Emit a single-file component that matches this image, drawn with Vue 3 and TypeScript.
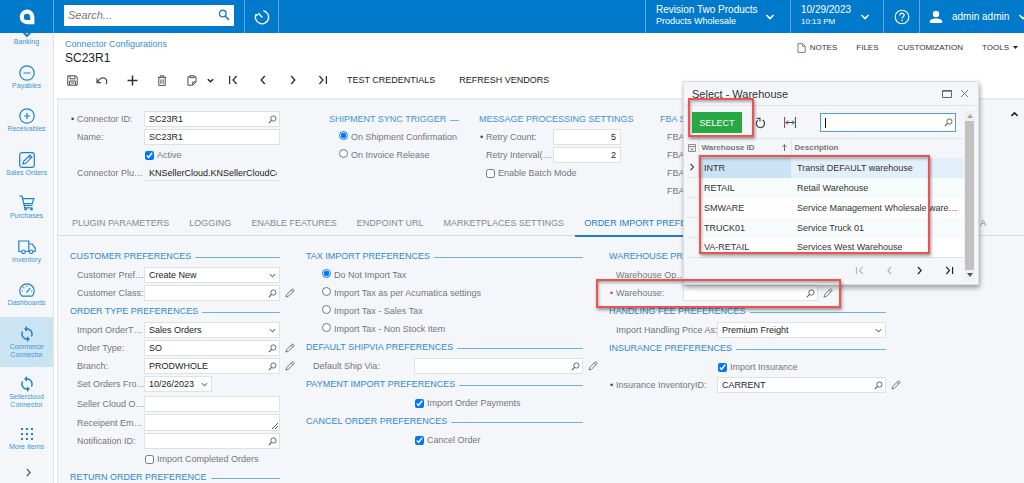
<script setup lang="ts">
import { ref } from 'vue'

type NavIcon = 'bank' | 'minus' | 'plus' | 'edit' | 'cart' | 'truck' | 'gauge' | 'sync' | 'grid'
interface NavItem { icon: NavIcon; label: string; active?: boolean }
interface Warehouse { id: string; description: string }

const modules: NavItem[] = [
  { icon: 'bank', label: 'Banking' },
  { icon: 'minus', label: 'Payables' },
  { icon: 'plus', label: 'Receivables' },
  { icon: 'edit', label: 'Sales Orders' },
  { icon: 'cart', label: 'Purchases' },
  { icon: 'truck', label: 'Inventory' },
  { icon: 'gauge', label: 'Dashboards' },
]
const extensions: NavItem[] = [
  { icon: 'sync', label: 'Commerce Connector', active: true },
  { icon: 'sync', label: 'Sellercloud Connector' },
  { icon: 'grid', label: 'More Items' },
]

const iconPaths: Record<NavIcon, string> = {
  bank: 'M8 3v9M4.6 11.6L8 15l3.4-3.4',
  minus: 'M8 .8a7.2 7.2 0 1 0 0 14.4A7.2 7.2 0 0 0 8 .8zM4.5 8h7',
  plus: 'M8 .8a7.2 7.2 0 1 0 0 14.4A7.2 7.2 0 0 0 8 .8zM5 8h6M8 5v6',
  edit: 'M3 .7h10A2.3 2.3 0 0 1 15.3 3v10a2.3 2.3 0 0 1-2.3 2.3H3A2.3 2.3 0 0 1 .7 13V3A2.3 2.3 0 0 1 3 .7zM4 12l.7-2.8 6.2-6.1 2 2-6.1 6.2zM9.6 4.4l2 2',
  cart: 'M.5 1.2h2.6l2 9.3h8.4M3.6 3.6h11.2l-1.5 5H4.7M5.5 10.5v2.3h8',
  truck: 'M2.6 12.5H-.2v-10.500h10v10.500H6.400M9.800 5h3.400l3 3.700v3.800h-2M10.200 12.500h.4',
  gauge: 'M3 14.2a7.2 7.2 0 1 1 10 0zM7.4 10.6l3.7-4.4M2.8 9h1.2M12 9h1.2M8 3.6v1.2M4.3 5.3l.9.9',
  sync: '',
  grid: '',
}

const tabs = ['PLUGIN PARAMETERS', 'LOGGING', 'ENABLE FEATURES', 'ENDPOINT URL', 'MARKETPLACES SETTINGS', 'ORDER IMPORT PREFE']
const activeTab = ref(5)

const taxOptions = ['Do Not Import Tax', 'Import Tax as per Acumatica settings', 'Import Tax - Sales Tax', 'Import Tax - Non Stock Item']
const tax = ref(taxOptions[0])
const triggers = ['On Shipment Confirmation', 'On Invoice Release']
const trigger = ref(triggers[0])

const warehouses: Warehouse[] = [
  { id: 'INTR', description: 'Transit DEFAULT warehouse' },
  { id: 'RETAIL', description: 'Retail Warehouse' },
  { id: 'SMWARE', description: 'Service Management Wholesale ware…' },
  { id: 'TRUCK01', description: 'Service Truck 01' },
  { id: 'VA-RETAIL', description: 'Services West Warehouse' },
]
const selected = ref('INTR')
</script>

<template>
  <svg class="defs" aria-hidden="true">
    <symbol id="i-lookup" viewBox="0 0 10 10"><g fill="none" stroke="currentColor"><circle cx="6" cy="3.9" r="2.9" stroke-width="1" /><path d="M3.9 6.1L1 9" stroke-width="1.2" /></g></symbol>
    <symbol id="i-pencil" viewBox="0 0 10 10"><path d="M1 9l.6-2.3L7.2 1.1c.7-.7 2.4.9 1.7 1.7L3.3 8.4zM6.1 2.2l1.7 1.7" fill="none" stroke="currentColor" stroke-width=".9" /></symbol>
    <symbol id="i-down" viewBox="0 0 10 10"><path d="M2 3.5l3 3 3-3" fill="none" stroke="#777" stroke-width="1.2" /></symbol>
    <symbol id="i-prev" viewBox="0 0 10 10"><path d="M6.8 1L3.2 5l3.6 4" fill="none" stroke="currentColor" stroke-width="1.4" /></symbol>
    <symbol id="i-next" viewBox="0 0 10 10"><path d="M3.2 1l3.6 4-3.6 4" fill="none" stroke="currentColor" stroke-width="1.4" /></symbol>
    <symbol id="i-first" viewBox="0 0 10 10"><path d="M8.6 1L5 5l3.6 4M1.6 1v8" fill="none" stroke="currentColor" stroke-width="1.3" /></symbol>
    <symbol id="i-last" viewBox="0 0 10 10"><path d="M1.4 1L5 5 1.4 9M8.4 1v8" fill="none" stroke="currentColor" stroke-width="1.3" /></symbol>
  </svg>
  <div class="app">
    <header class="topbar">
      <a class="logo" href="#" aria-label="Home">
        <svg width="16" height="16" viewBox="0 0 16 16"><path d="M8 .6a7.4 7.4 0 0 1 7.4 7.4v7.2H8A7.3 7.3 0 0 1 8 .6z" fill="#fff" /><path d="M8 4.7a3.2 3.2 0 0 1 3.2 3.2v3.2H8a3.2 3.2 0 0 1 0-6.4z" fill="#027acc" /></svg>
      </a>
      <div class="search-cell">
        <label class="search">
          <input type="text" placeholder="Search..." aria-label="Search" />
          <svg width="12" height="12" viewBox="0 0 12 12" fill="none" stroke="#1b7fcc"><circle cx="4.8" cy="4.6" r="3.3" stroke-width="1.4" /><path d="M7.2 7l3.8 4" stroke-width="1.7" /></svg>
        </label>
      </div>
      <button class="history" aria-label="History">
        <svg width="16" height="16" viewBox="0 0 16 16" fill="none" stroke="#fff" stroke-width="1.4"><path d="M9.400 1.700A6.600 6.600 0 1 1 1.900 5.600M4.400 4.200l4 4.200M1.400 5.800l2.600.2" /></svg>
      </button>
      <button class="company">
        <span class="two"><span class="big">Revision Two Products</span><span class="small">Products Wholesale</span></span>
        <svg class="chev" viewBox="0 0 10 10"><path d="M1.500 3l3.500 3.600L8.500 3" fill="none" stroke="#fff" stroke-width="1.5" /></svg>
      </button>
      <button class="date">
        <span class="two"><span class="big">10/29/2023</span><span class="time">10:13 PM</span></span>
        <svg class="chev" viewBox="0 0 10 10"><path d="M1.500 3l3.500 3.600L8.500 3" fill="none" stroke="#fff" stroke-width="1.5" /></svg>
      </button>
      <button class="help" aria-label="Help">
        <svg width="16" height="16" viewBox="0 0 16 16" fill="none" stroke="#fff"><circle cx="8" cy="8" r="6.8" stroke-width="1.1" /><path d="M5.900 6.400c0-3 4.300-2.800 4.300-.3 0 1.700-2.100 1.700-2.100 3.500M8.100 10.800v1.400" stroke-width="1.2" /></svg>
      </button>
      <button class="user">
        <svg width="14" height="14" viewBox="0 0 14 14" fill="#fff"><circle cx="7" cy="4" r="3.2" /><path d="M.8 13v-1.600c0-4 12.400-4 12.400 0V13z" /></svg>
        <span class="big">admin admin</span>
        <svg class="chev" viewBox="0 0 10 10"><path d="M1.500 3l3.500 3.600L8.500 3" fill="none" stroke="#fff" stroke-width="1.5" /></svg>
      </button>
    </header>

    <div class="body">
      <nav class="side" aria-label="Modules">
        <div v-for="(group, g) in [modules, extensions]" :key="g" :class="g === 0 ? 'modules' : 'extensions'">
          <a v-for="item in group" :key="item.label" href="#" class="nav-item" :class="{ active: item.active }">
            <svg width="16" height="16" viewBox="0 0 16 16">
              <path v-if="iconPaths[item.icon]" :d="iconPaths[item.icon]" fill="none" stroke="#1b82cd" :stroke-width="item.icon === 'bank' ? 2 : 1.2" />
              <g v-if="item.icon === 'cart'" fill="#1b82cd"><circle cx="6.6" cy="14.2" r="1.2" /><circle cx="12.6" cy="14.2" r="1.2" /></g>
              <g v-if="item.icon === 'truck'" fill="none" stroke="#1b82cd" stroke-width="1.2"><circle cx="4.5" cy="12.8" r="1.800" /><circle cx="12.2" cy="12.8" r="1.800" /></g>
              <path
                v-if="item.icon === 'sync'"
                fill="#1b82cd"
                transform="translate(-.7 -.7) scale(.725)"
                d="M12 4V1L8 5l4 4V6c3.310 0 6 2.690 6 6 0 1.010-.25 1.970-.7 2.800l1.460 1.460C19.540 15.030 20 13.570 20 12c0-4.420-3.580-8-8-8zm0 14c-3.310 0-6-2.690-6-6 0-1.010.25-1.970.7-2.800L5.240 7.740C4.460 8.970 4 10.430 4 12c0 4.420 3.580 8 8 8v3l4-4-4-4v3z"
              />
              <g v-if="item.icon === 'grid'" fill="#1b82cd">
                <template v-for="r in 3" :key="r"><rect v-for="c in 3" :key="c" :x="c * 5 - 3" :y="r * 5 - 3" width="2" height="2" /></template>
              </g>
            </svg>
            <span>{{ item.label }}</span>
          </a>
        </div>
        <button class="expand" aria-label="Expand menu"><svg width="9" height="9"><use href="#i-next" /></svg></button>
      </nav>

      <main>
        <div class="page-head">
          <div class="crumbs">
            <a href="#">Connector Configurations</a>
            <h1>SC23R1</h1>
          </div>
          <div class="links">
            <a href="#"><svg width="9" height="10" viewBox="0 0 9 10"><path d="M1 .6h4.600l2.600 2.600v6.200H1z" fill="#fff" stroke="#4f9377" /><path d="M5.400.8v2.800h2.600" fill="none" stroke="#b59a35" /></svg>NOTES</a>
            <a href="#">FILES</a>
            <a href="#">CUSTOMIZATION</a>
            <a href="#">TOOLS<svg width="5" height="3" viewBox="0 0 5 3"><path d="M0 0h5L2.500 3z" fill="#222" /></svg></a>
          </div>
        </div>

        <div class="toolbar" role="toolbar">
          <button aria-label="Save"><svg width="11" height="11" viewBox="0 0 11 11" fill="none" stroke="#4a4a45"><path d="M.8.8h8l1.400 1.400v8H.8zM3 .8v3h5v-3M2.600 10.200V6h5.800v4.200M4 8h3" /></svg></button>
          <button aria-label="Undo"><svg width="12" height="11" viewBox="0 0 12 11" fill="none" stroke="#444" stroke-width="1.2"><path d="M1 3.600v4h4M1.400 7.200C4 2.800 6.600 2.200 8.800 3.200c2.400 1.200 2.400 4 1.200 6" /></svg></button>
          <button aria-label="Add"><svg width="11" height="11" viewBox="0 0 11 11" stroke="#333" stroke-width="1.5"><path d="M.5 5.500h10M5.500.5v10" /></svg></button>
          <button aria-label="Delete"><svg width="10" height="11" viewBox="0 0 10 11" fill="none" stroke="#55524b"><path d="M.8 2.400h8.400M3.200 2.200V.8h3.600v1.400M1.800 2.600v7.800h6.400V2.600M3.900 4.400v4.400M6.100 4.400v4.400" /></svg></button>
          <button aria-label="Copy"><svg width="10" height="11" viewBox="0 0 10 11" fill="none" stroke="#4a4a45"><path d="M3 1.800H.9v8.400h4.700L9 7V1.800H7M5.700 10V7H9" /><path d="M3 .7h4v2H3z" /></svg></button>
          <button class="narrow" aria-label="Copy options"><svg width="9" height="9" viewBox="0 0 10 10"><path d="M2 3.500l3 3 3-3" fill="none" stroke="#222" stroke-width="1.6" /></svg></button>
          <button aria-label="First"><svg width="10" height="10"><use href="#i-first" /></svg></button>
          <button aria-label="Previous"><svg width="10" height="10"><use href="#i-prev" /></svg></button>
          <button aria-label="Next"><svg width="10" height="10"><use href="#i-next" /></svg></button>
          <button aria-label="Last"><svg width="10" height="10"><use href="#i-last" /></svg></button>
          <button class="text">TEST CREDENTIALS</button>
          <button class="text">REFRESH VENDORS</button>
        </div>

        <section class="panel">
          <div class="summary">
            <div class="col">
              <div class="row"><label class="req" for="cid">Connector ID:</label><span class="field"><input id="cid" value="SC23R1" /><svg class="glyph"><use href="#i-lookup" /></svg></span></div>
              <div class="row"><label for="nm">Name:</label><span class="field"><input id="nm" value="SC23R1" /></span></div>
              <div class="row"><span class="lead"></span><label class="tick"><input type="checkbox" checked />Active</label></div>
              <div class="row"><label for="plug">Connector Plu…</label><span class="field flat"><input id="plug" value="KNSellerCloud.KNSellerCloudCc" readonly /></span></div>
            </div>
            <fieldset class="col">
              <h2>SHIPMENT SYNC TRIGGER</h2>
              <label v-for="t in triggers" :key="t" class="radio"><input v-model="trigger" type="radio" name="trigger" :value="t" />{{ t }}</label>
            </fieldset>
            <div class="col bare">
              <h2>MESSAGE PROCESSING SETTINGS</h2>
              <div class="row"><label class="req" for="rc">Retry Count:</label><span class="field num"><input id="rc" value="5" /></span></div>
              <div class="row"><label for="ri">Retry Interval(…</label><span class="field num"><input id="ri" value="2" /></span></div>
              <label class="tick indent"><input type="checkbox" />Enable Batch Mode</label>
            </div>
            <div class="col bare">
              <h2>FBA S</h2>
              <div v-for="n in 4" :key="n" class="row"><span class="caption">FBA</span></div>
            </div>
            <button class="collapse" aria-label="Collapse"><svg width="9" height="9" viewBox="0 0 10 10"><path d="M1.500 6.500L5 3.200l3.500 3.300" fill="none" stroke="#222" stroke-width="1.7" /></svg></button>
          </div>

          <div class="tabs" role="tablist">
            <button v-for="(t, i) in tabs" :key="t" role="tab" :aria-selected="i === activeTab" :class="{ on: i === activeTab }" @click="activeTab = i">{{ t }}</button>
            <button class="last" role="tab" aria-selected="false">A</button>
          </div>

          <div class="prefs">
            <div class="col">
              <h2>CUSTOMER PREFERENCES</h2>
              <div class="rows">
                <div class="row"><label for="cp">Customer Pref…</label><span class="field"><select id="cp"><option>Create New</option></select><svg class="glyph"><use href="#i-down" /></svg></span></div>
                <div class="row"><label for="cc">Customer Class:</label><span class="field"><input id="cc" /><svg class="glyph"><use href="#i-lookup" /></svg></span><button class="pencil" aria-label="Edit customer class"><svg><use href="#i-pencil" /></svg></button></div>
              </div>
              <h2>ORDER TYPE PREFERENCES</h2>
              <div class="rows">
                <div class="row"><label for="iot">Import OrderT…</label><span class="field"><select id="iot"><option>Sales Orders</option></select><svg class="glyph"><use href="#i-down" /></svg></span></div>
                <div class="row"><label for="ot">Order Type:</label><span class="field"><input id="ot" value="SO" /><svg class="glyph"><use href="#i-lookup" /></svg></span><button class="pencil" aria-label="Edit order type"><svg><use href="#i-pencil" /></svg></button></div>
                <div class="row"><label for="br">Branch:</label><span class="field"><input id="br" value="PRODWHOLE" /><svg class="glyph"><use href="#i-lookup" /></svg></span><button class="pencil" aria-label="Edit branch"><svg><use href="#i-pencil" /></svg></button></div>
                <div class="row"><label for="dt">Set Orders Fro…</label><span class="field short"><input id="dt" value="10/26/2023" /><svg class="glyph"><use href="#i-down" /></svg></span></div>
              </div>
              <div class="rows spaced">
                <div class="row"><label for="sc">Seller Cloud O…</label><span class="field"><input id="sc" /></span></div>
                <div class="row tall"><label for="re">Receipent Em…</label><span class="field"><textarea id="re"></textarea><svg class="grip" viewBox="0 0 6 6"><path d="M0 6l6-6M3 6l3-3" stroke="#555" /></svg></span></div>
                <div class="row"><label for="ni">Notification ID:</label><span class="field"><input id="ni" /><svg class="glyph"><use href="#i-lookup" /></svg></span></div>
                <div class="row"><span class="lead"></span><label class="tick"><input type="checkbox" />Import Completed Orders</label></div>
              </div>
              <h2>RETURN ORDER PREFERENCE</h2>
            </div>

            <div class="col middle">
              <h2>TAX IMPORT PREFERENCES</h2>
              <div class="rows">
                <label v-for="t in taxOptions" :key="t" class="radio wide"><input v-model="tax" type="radio" name="tax" :value="t" />{{ t }}</label>
              </div>
              <h2>DEFAULT SHIPVIA PREFERENCES</h2>
              <div class="rows">
                <div class="row"><label for="sv">Default Ship Via:</label><span class="field"><input id="sv" /><svg class="glyph"><use href="#i-lookup" /></svg></span><button class="pencil" aria-label="Edit ship via"><svg><use href="#i-pencil" /></svg></button></div>
              </div>
              <h2>PAYMENT IMPORT PREFERENCES</h2>
              <div class="rows"><div class="row"><span class="lead"></span><label class="tick"><input type="checkbox" checked />Import Order Payments</label></div></div>
              <h2>CANCEL ORDER PREFERENCES</h2>
              <div class="rows"><div class="row"><span class="lead"></span><label class="tick"><input type="checkbox" checked />Cancel Order</label></div></div>
            </div>

            <div class="col right">
              <h2>WAREHOUSE PRE</h2>
              <div class="rows">
                <div class="row"><span class="caption">Warehouse Op…</span></div>
                <div class="row marked"><label class="req red" for="wh">Warehouse:</label><span class="field"><input id="wh" /><svg class="glyph"><use href="#i-lookup" /></svg></span><button class="pencil" aria-label="Edit warehouse"><svg><use href="#i-pencil" /></svg></button><span class="callout on-field"></span></div>
              </div>
              <h2>HANDLING FEE PREFERENCES</h2>
              <div class="rows">
                <div class="row"><label for="hp">Import Handling Price As:</label><span class="field"><select id="hp"><option>Premium Freight</option></select><svg class="glyph"><use href="#i-down" /></svg></span></div>
              </div>
              <h2>INSURANCE PREFERENCES</h2>
              <div class="rows">
                <div class="row"><span class="lead"></span><label class="tick"><input type="checkbox" checked />Import Insurance</label></div>
                <div class="row"><label class="req" for="ins">Insurance InventoryID:</label><span class="field"><input id="ins" value="CARRENT" /><svg class="glyph"><use href="#i-lookup" /></svg></span><button class="pencil" aria-label="Edit insurance item"><svg><use href="#i-pencil" /></svg></button></div>
              </div>
            </div>
          </div>
        </section>
      </main>
    </div>

    <div class="dialog" role="dialog" aria-labelledby="dlg">
      <div class="dialog-head">
        <h3 id="dlg">Select - Warehouse</h3>
        <button aria-label="Maximize"><svg width="10" height="8" viewBox="0 0 10 8"><path d="M.5.5h9v7h-9zM0 1.200h10" fill="none" stroke="#666" /></svg></button>
        <button aria-label="Close"><svg width="9" height="9" viewBox="0 0 9 9"><path d="M1 1l7 7M8 1L1 8" stroke="#777" /></svg></button>
      </div>
      <div class="dialog-body">
        <div class="dialog-main">
          <div class="dialog-tools">
            <button class="select">SELECT</button>
            <button class="tool" aria-label="Refresh"><svg width="11" height="12" viewBox="0 0 11 12"><path d="M7.600 3A4.100 4.100 0 1 1 3 3.200" fill="none" stroke="#444" stroke-width="1.2" /><path d="M1.800 1.400h3.200v3.200" fill="none" stroke="#444" stroke-width="1.2" /></svg></button>
            <button class="tool" aria-label="Fit columns"><svg width="12" height="11" viewBox="0 0 12 11" fill="none" stroke="#444"><path d="M11.400 0v11M2 5.500h8M4 3.500l-2 2 2 2M8.200 3.500l2 2-2 2" /><path d="M.6 0v11" stroke="#8c3a4b" /></svg></button>
            <span class="find"><span class="caret"></span><input aria-label="Find warehouse" /><svg class="glyph"><use href="#i-lookup" /></svg></span>
          </div>
          <table>
            <colgroup><col class="c0" /><col class="c1" /><col /></colgroup>
            <thead>
              <tr>
                <th><svg width="8" height="8" viewBox="0 0 8 8" fill="none" stroke="#777"><path d="M.5.5h7v7h-7zM.5 2.500h7M2.500 4l3 2.500M5.500 4l-3 2.500" stroke-width=".8" /></svg></th>
                <th>Warehouse ID<svg class="sort" width="5" height="7" viewBox="0 0 5 7"><path d="M2.500 7V1M.6 2.600L2.500.8l1.900 1.800" fill="none" stroke="#555" stroke-width=".9" /></svg></th>
                <th>Description</th>
              </tr>
            </thead>
            <tbody>
              <tr v-for="w in warehouses" :key="w.id" :class="{ sel: w.id === selected }" @click="selected = w.id">
                <td><svg v-if="w.id === selected" width="8" height="8"><use href="#i-next" /></svg></td>
                <td>{{ w.id }}</td>
                <td>{{ w.description }}</td>
              </tr>
            </tbody>
          </table>
          <div class="pager">
            <button disabled aria-label="First page"><svg width="9" height="9"><use href="#i-first" /></svg></button>
            <button disabled aria-label="Previous page"><svg width="9" height="9"><use href="#i-prev" /></svg></button>
            <button aria-label="Next page"><svg width="9" height="9"><use href="#i-next" /></svg></button>
            <button aria-label="Last page"><svg width="9" height="9"><use href="#i-last" /></svg></button>
          </div>
        </div>
        <div class="scroll">
          <svg width="6" height="4" viewBox="0 0 6 4"><path d="M0 4h6L3 0z" fill="#a5a5a5" /></svg>
          <span class="thumb"></span>
          <svg width="6" height="4" viewBox="0 0 6 4"><path d="M0 0h6L3 4z" fill="#555" /></svg>
        </div>
      </div>
      <span class="callout on-select"></span>
      <span class="callout on-rows"></span>
    </div>
  </div>
</template>

<style>
body { margin: 0; background: #fff; overflow: hidden; }
</style>

<style scoped>
* { box-sizing: border-box; }
.defs { position: absolute; width: 0; height: 0; }
.app {
  position: relative;
  display: flex;
  flex-direction: column;
  height: 100vh;
  overflow: hidden;
  font: 9px/12px "Liberation Sans", Arial, sans-serif;
  color: #333;
}
button { border: 0; padding: 0; margin: 0; background: none; font: inherit; color: inherit; cursor: pointer; }
svg { display: block; flex: none; }
a { text-decoration: none; color: inherit; }
h1, h2, h3 { margin: 0; font-weight: 400; }
input, select, textarea { font: inherit; color: inherit; }

.topbar { display: flex; flex: none; height: 33px; background: #027acc; color: #fff; }
.topbar > * { display: flex; align-items: center; flex: none; }
.topbar > * + * { border-left: 1px solid #5ba9df; }
.logo { width: 53px; justify-content: center; }
.search-cell { width: 191px; padding: 0 10px; }
.search { display: flex; align-items: center; width: 100%; height: 21px; padding: 0 4px; background: #fff; margin-bottom: 3px; }
.search input { flex: 1; min-width: 0; border: 0; padding: 0; background: none; outline: 0; font-size: 11px; }
.search input::placeholder { color: #777; font-style: italic; opacity: 1; }
.history { width: 35px; justify-content: center; border-right: 1px solid #5ba9df; }
.topbar .company { margin-left: auto; width: 145px; }
.company, .date { justify-content: space-between; padding: 0 15px 0 10px; text-align: left; }
.date { width: 93px; padding-right: 13px; }
.two { display: flex; flex-direction: column; padding-bottom: 2px; }
.big { font-size: 10px; line-height: 12px; white-space: nowrap; }
.small { line-height: 11px; }
.time { font-size: 8px; line-height: 12px; }
.chev { width: 10px; height: 10px; }
.help { width: 36px; justify-content: center; }
.user { width: 105px; overflow: hidden; padding-left: 9px; gap: 9px; }

.body { display: flex; flex: 1; min-height: 0; }
.side { flex: none; width: 54px; overflow: hidden; background: #f4f6f9; border-right: 1px solid #dfe2e6; }
.modules { display: grid; grid-template-rows: repeat(7, 1fr); height: 305px; margin-top: -21px; }
.nav-item { display: flex; flex-direction: column; align-items: center; gap: 1px; padding: 9px 4px 8px; font-size: 7px; line-height: 8px; text-align: center; color: #3d97d6; }
.modules .nav-item { padding-bottom: 0; }
.nav-item svg { overflow: visible; }
.nav-item.active { background: #cbe4f4; }
.expand { display: block; margin: 9px auto 0 24px; color: #555; }

main { flex: 1; min-width: 0; display: flex; flex-direction: column; background: #fff; }
.page-head { display: flex; justify-content: space-between; padding: 5px 6px 0 11px; }
.crumbs a { display: block; color: #3a90d3; }
h1 { font-size: 12px; line-height: 16px; color: #222; }
.links { display: flex; gap: 19px; font-size: 8px; line-height: 18px; }
.links a { display: flex; align-items: center; gap: 4px; height: 19px; }
.toolbar { display: flex; align-items: center; height: 28px; padding-left: 3px; margin-bottom: 4px; color: #333; }
.toolbar button { display: flex; align-items: center; justify-content: center; width: 30px; height: 22px; }
.toolbar .narrow { width: 11px; margin: 0 2px 0 -2px; }
.toolbar .text { width: auto; margin-left: 9px; margin-right: 15px; color: #222; }

.panel { flex: 1; min-height: 0; margin-left: 3px; background: #f4f6f9; border-top: 2px solid #e9ebee; border-left: 1px solid #e2e5e8; }
.summary { display: grid; grid-template-columns: 259fr 150fr 181fr 350fr 10px; padding: 10px 4px 0 12px; height: 110px; align-items: start; }
fieldset { border: 0; margin: 0; padding: 0; min-width: 0; }
.summary .col:first-child { padding-right: 49px; }
fieldset.col { padding-right: 20px; }
.summary h2 { color: #3f94d5; }

h2 { display: flex; align-items: center; gap: 4px; height: 18px; font-size: 9px; line-height: 18px; color: #2f89cf; white-space: nowrap; }
h2::after { content: ""; flex: 1; height: 1px; background: #6bb2e2; margin-top: 3px; }
.bare h2::after { display: none; }
.row { display: flex; align-items: center; height: 18px; padding-left: 7px; color: #74777a; white-space: nowrap; }
.row > label:first-child, .lead { flex: none; width: 67px; }
.req { position: relative; }
.req::before { content: "•"; position: absolute; left: -6px; color: #444; }
.req.red::before { color: #e53935; }
.field { position: relative; display: flex; align-items: center; flex: 1; min-width: 0; height: 16px; background: #fff; border: 1px solid #dfe2e5; color: #222; }
.field input, .field select, .field textarea { flex: 1; width: 100%; min-width: 0; height: 14px; padding: 0 2px 0 4px; border: 0; background: none; outline: 0; appearance: none; resize: none; }
.field.flat { background: none; border-color: transparent transparent #dfe2e5; }
.field.num { flex: none; width: 68px; }
.field.num input { text-align: right; padding-right: 4px; }
.field.short { flex: none; width: 68px; }
.field.short input { padding-right: 0; }
.glyph { width: 9px; height: 9px; margin-right: 2px; color: #555; }
.grip { position: absolute; right: 1px; bottom: 1px; width: 6px; height: 6px; }
.row.tall { height: 19px; }
.tall .field { height: 17px; }
.pencil { flex: none; width: 10px; height: 10px; margin: 0 -15px 0 5px; color: #666; }
.pencil svg { width: 10px; height: 10px; }
.tick, .radio { display: flex; align-items: center; gap: 3px; height: 18px; color: #74777a; white-space: nowrap; }
.tick input { width: 9px; height: 9px; margin: 0 0 0 1px; }
.tick.indent { padding-left: 6px; }
.radio { padding-left: 10px; }
.radio input { width: 9px; height: 9px; margin: 0 0 3px; }
.radio.wide { padding-left: 16px; }
.collapse { align-self: start; }

.tabs { display: flex; gap: 2px; height: 26px; padding: 0 38px 0 5px; border-bottom: 1px solid #d8dcdf; color: #858a8e; }
.tabs button { height: 27px; padding: 0 9px; border-bottom: 2px solid transparent; white-space: nowrap; }
.tabs .on { color: #1c80cc; border-color: #1c80cc; }
.tabs .last { margin-left: auto; padding: 0; }

.prefs { display: grid; grid-template-columns: 236fr 303fr 415fr; padding: 11px 0 0 12px; }
.rows { padding-top: 1px; }
.rows.spaced { padding-top: 2px; }
.prefs .col { padding-right: 26px; min-width: 0; }
.prefs .right { padding-right: 138px; }
.middle .row > label:first-child, .middle .lead, .right .row > label:first-child, .right .lead { width: 101px; }
.marked { position: relative; padding-right: 68px; }
.right .marked > label:first-child { width: 67px; }

.callout { position: absolute; z-index: 5; border: 2px solid #ef5252; box-shadow: 1px 2px 3px rgba(0, 0, 0, .4), inset 1px 2px 3px rgba(0, 0, 0, .3); pointer-events: none; }
.on-field { left: -13px; right: 45px; top: -5px; height: 29px; }
.on-select { left: 4px; top: 16px; width: 66px; height: 39px; }
.on-rows { left: 15px; right: 48px; top: 73px; height: 99px; }

.dialog { position: absolute; z-index: 3; top: 81px; right: 45px; width: 296px; background: #f4f6f9; border: 1px solid #d9dce0; box-shadow: 1px 3px 5px rgba(0, 0, 0, .35); }
.dialog-head { display: flex; align-items: center; gap: 8px; height: 24px; padding: 0 9px 0 8px; border-bottom: 1px solid #e1e4e7; }
h3 { flex: 1; font-size: 11px; line-height: 24px; }
.dialog-body { display: flex; padding: 4px 3px 2px 3px; }
.dialog-main { flex: 1; min-width: 0; }
.dialog-tools { display: flex; align-items: center; height: 28px; padding: 0 8px 3px 5px; }
.select { flex: none; width: 50px; height: 21px; background: #28a745; color: #fff; }
.tool { display: flex; justify-content: center; width: 30px; }
.select + .tool { margin-left: 3px; }
.find { display: flex; align-items: center; flex: 1; height: 19px; margin-left: 15px; background: #fff; border: 1px solid #4b9fdd; }
.find input { flex: 1; min-width: 0; border: 0; outline: 0; padding: 0; background: none; }
.caret { width: 1px; height: 10px; margin-left: 4px; background: #111; }
table { width: 100%; border-collapse: collapse; table-layout: fixed; border-bottom: 1px solid #dfe2e5; }
.c0 { width: 11px; }
.c1 { width: 93px; }
th { height: 19px; padding: 0 0 0 3px; font-size: 8px; text-align: left; color: #74777a; border-top: 1px solid #e3e6e8; border-right: 1px solid #e3e6e8; }
th:first-child { padding: 0 0 0 1px; }
th:last-child { border-right: 0; }
.sort { float: right; margin: 2px 4px 0 0; }
td { height: 20px; padding: 0 0 0 6px; white-space: nowrap; background: #fff; }
td:first-child { padding: 0 0 0 1px; background: #f4f6f9; border-bottom: 1px solid #e3e6e8; }
tr:nth-child(even) td:not(:first-child) { background: #f6fcfc; }
.sel td:nth-child(2) { background: #c9e3f4; }
.sel td:nth-child(3) { background: #e3f0f9; }
.pager { display: flex; justify-content: flex-end; height: 24px; align-items: center; color: #222; }
.pager button { display: flex; justify-content: center; width: 30px; }
.pager button:disabled { color: #b4b7ba; }
.scroll { display: flex; flex-direction: column; align-items: center; flex: none; width: 11px; padding: 4px 0 5px; background: #f1f1f1; }
.thumb { flex: 1; width: 9px; margin: 3px 0; background: #c1c1c1; }
</style>
